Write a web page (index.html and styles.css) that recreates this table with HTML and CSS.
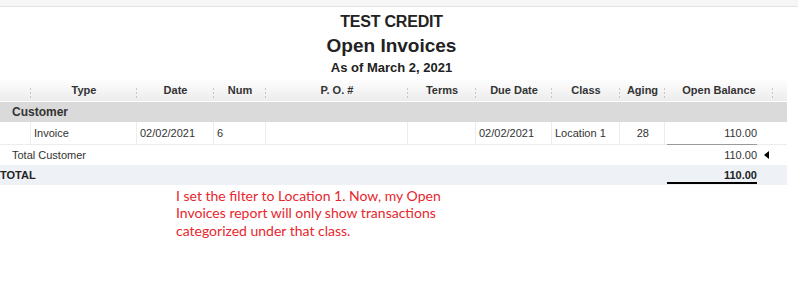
FILE: index.html
```html
<!DOCTYPE html>
<html lang="en">
<head>
<meta charset="utf-8">
<title>Open Invoices</title>
<link rel="stylesheet" href="styles.css">
</head>
<body>
<div class="topbar"></div>
<div class="report">
  <div class="report-head">
    <div class="company">TEST CREDIT</div>
    <div class="title">Open Invoices</div>
    <div class="asof">As of March 2, 2021</div>
  </div>
  <table class="grid">
    <colgroup>
      <col class="w31"><col class="w106"><col class="w77"><col class="w52"><col class="w142"><col class="w68"><col class="w76"><col class="w68"><col class="w45"><col class="w108"><col class="w14">
    </colgroup>
    <thead>
      <tr>
        <th class="sep"></th>
        <th class="sep">Type</th>
        <th class="sep">Date</th>
        <th class="sep">Num</th>
        <th class="sep">P. O. #</th>
        <th class="sep">Terms</th>
        <th class="sep">Due Date</th>
        <th class="sep">Class</th>
        <th class="sep">Aging</th>
        <th class="sep">Open Balance</th>
        <th></th>
      </tr>
    </thead>
    <tbody>
      <tr class="section"><td colspan="11">Customer</td></tr>
      <tr class="data">
        <td></td>
        <td>Invoice</td>
        <td>02/02/2021</td>
        <td>6</td>
        <td></td>
        <td></td>
        <td>02/02/2021</td>
        <td>Location 1</td>
        <td class="num">28</td>
        <td class="amt">110.00</td>
        <td class="end"></td>
      </tr>
      <tr class="subtotal">
        <td colspan="9" class="label">Total Customer</td>
        <td class="amt">110.00<i class="marker"></i></td>
        <td></td>
      </tr>
      <tr class="total">
        <td colspan="9" class="label">TOTAL</td>
        <td class="amt">110.00</td>
        <td></td>
      </tr>
    </tbody>
  </table>
</div>
<p class="note">I set the filter to Location 1. Now, my Open<br>Invoices report will only show transactions<br>categorized under that class.</p>
</body>
</html>
```
FILE: styles.css
```css
html, body {
  margin: 0;
  padding: 0;
  background: #ffffff;
}

body {
  font-family: "Liberation Sans", Arial, sans-serif;
  color: #333333;
}

.topbar {
  height: 6px;
  background: #f6f6f6;
  border-bottom: 1px solid #e3e3e3;
}

.report {
  width: 787px;
}

.report-head {
  padding-top: 3px;
  text-align: center;
  font-weight: bold;
  color: #222222;
  padding-right: 4px;
}

.company {
  font-size: 16px;
  line-height: 24px;
  letter-spacing: -0.2px;
}

.title {
  font-size: 19px;
  line-height: 24px;
}

.asof {
  font-size: 13px;
  line-height: 20px;
}

.grid {
  width: 787px;
  table-layout: fixed;
  border-collapse: separate;
  border-spacing: 0;
  font-size: 11px;
}

.w31 { width: 31px; }
.w106 { width: 106px; }
.w77 { width: 77px; }
.w52 { width: 52px; }
.w142 { width: 142px; }
.w68 { width: 68px; }
.w76 { width: 76px; }
.w45 { width: 45px; }
.w108 { width: 108px; }
.w14 { width: 14px; }

.grid th {
  height: 23px;
  padding: 0;
  font-weight: bold;
  color: #333333;
  text-align: center;
  background: linear-gradient(#ffffff, #ececec);
  position: relative;
  white-space: nowrap;
}

.grid th.sep::after {
  content: "";
  position: absolute;
  right: -1px;
  top: 10px;
  width: 2px;
  height: 10px;
  background: repeating-linear-gradient(to bottom, #c6c6c6 0 2px, transparent 2px 4px);
}

.grid td {
  padding: 0 3px;
  white-space: nowrap;
  overflow: hidden;
}

.section td {
  height: 20px;
  border-top: 1px solid #ffffff;
  background: #dadada;
  padding-left: 12px;
  font-size: 12px;
  font-weight: bold;
  color: #333333;
}

.data td {
  height: 22px;
  border-bottom: 1px solid #ececec;
  border-right: 1px solid #ececec;
  color: #333333;
}

.data td.amt,
.data td.end {
  border-right: 0;
}

.data td.num {
  text-align: right;
  padding-right: 15px;
}

.grid td.amt {
  text-align: right;
  padding-right: 16px;
}

.data td.amt {
  border-bottom-color: transparent;
  background:
    linear-gradient(#9a9a9a, #9a9a9a) no-repeat left 2px bottom / calc(100% - 18px) 1px,
    linear-gradient(#ececec, #ececec) no-repeat left bottom / 100% 1px;
  background-origin: border-box;
}

.subtotal td {
  height: 20px;
}

.subtotal td.label,
.total td.label {
  padding-left: 12px;
}

.subtotal td.amt {
  position: relative;
  overflow: visible;
}

.marker {
  position: absolute;
  right: 4px;
  top: 6px;
  width: 0;
  height: 0;
  border-top: 4px solid transparent;
  border-bottom: 4px solid transparent;
  border-right: 5px solid #000000;
}

.total td {
  height: 20px;
  background: #eef2f7;
  font-weight: bold;
  color: #222222;
}

.total td.label {
  padding-left: 0;
}

.total td.amt {
  background:
    linear-gradient(#000000, #000000) no-repeat left 2px bottom 1px / calc(100% - 18px) 2px,
    #eef2f7;
}

.note {
  margin: 2px 0 0 176px;
  font-family: Lato, "Open Sans", sans-serif;
  font-size: 14px;
  line-height: 17.3px;
  color: #e8262d;
}
```
